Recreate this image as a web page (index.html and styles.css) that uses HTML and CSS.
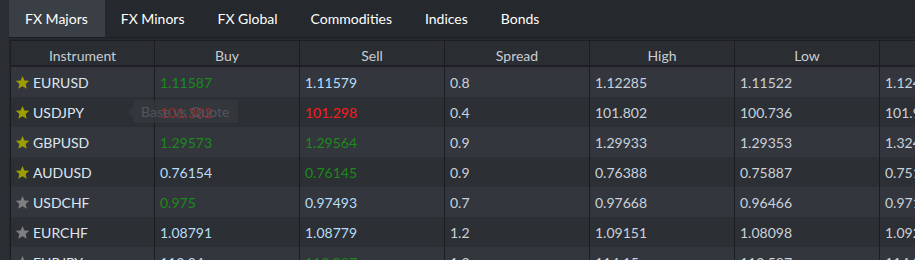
FILE: index.html
```html
<!DOCTYPE html>
<html lang="en">
<head>
    <meta charset="UTF-8">
    <title>Quotes</title>
    <link rel="stylesheet" href="styles.css">
</head>
<body>
    <div class="panel">
        <nav class="tabs">
            <a class="tab active">FX Majors</a>
            <a class="tab">FX Minors</a>
            <a class="tab">FX Global</a>
            <a class="tab">Commodities</a>
            <a class="tab">Indices</a>
            <a class="tab">Bonds</a>
        </nav>

        <div class="grid-wrap">
            <table class="quotes">
                <thead>
                    <tr>
                        <th class="first">Instrument</th>
                        <th>Buy</th>
                        <th>Sell</th>
                        <th>Spread</th>
                        <th>High</th>
                        <th>Low</th>
                        <th>Open</th>
                    </tr>
                </thead>
                <tbody>
                    <tr>
                        <td class="name"><svg class="star fav" viewBox="0 0 24 24"><polygon points="12,1.5 15.1,8.6 22.8,9.3 17,14.5 18.7,22.1 12,18.1 5.3,22.1 7,14.5 1.2,9.3 8.9,8.6"/></svg>EURUSD</td>
                        <td class="up">1.11587</td>
                        <td class="px">1.11579</td>
                        <td>0.8</td>
                        <td>1.12285</td>
                        <td>1.11522</td>
                        <td>1.12435</td>
                    </tr>
                    <tr>
                        <td class="name"><svg class="star fav" viewBox="0 0 24 24"><polygon points="12,1.5 15.1,8.6 22.8,9.3 17,14.5 18.7,22.1 12,18.1 5.3,22.1 7,14.5 1.2,9.3 8.9,8.6"/></svg>USDJPY</td>
                        <td class="down">101.302</td>
                        <td class="down">101.298</td>
                        <td>0.4</td>
                        <td>101.802</td>
                        <td>100.736</td>
                        <td>101.912</td>
                    </tr>
                    <tr>
                        <td class="name"><svg class="star fav" viewBox="0 0 24 24"><polygon points="12,1.5 15.1,8.6 22.8,9.3 17,14.5 18.7,22.1 12,18.1 5.3,22.1 7,14.5 1.2,9.3 8.9,8.6"/></svg>GBPUSD</td>
                        <td class="up">1.29573</td>
                        <td class="up">1.29564</td>
                        <td>0.9</td>
                        <td>1.29933</td>
                        <td>1.29353</td>
                        <td>1.32441</td>
                    </tr>
                    <tr>
                        <td class="name"><svg class="star fav" viewBox="0 0 24 24"><polygon points="12,1.5 15.1,8.6 22.8,9.3 17,14.5 18.7,22.1 12,18.1 5.3,22.1 7,14.5 1.2,9.3 8.9,8.6"/></svg>AUDUSD</td>
                        <td class="px">0.76154</td>
                        <td class="up">0.76145</td>
                        <td>0.9</td>
                        <td>0.76388</td>
                        <td>0.75887</td>
                        <td>0.75122</td>
                    </tr>
                    <tr>
                        <td class="name"><svg class="star" viewBox="0 0 24 24"><polygon points="12,1.5 15.1,8.6 22.8,9.3 17,14.5 18.7,22.1 12,18.1 5.3,22.1 7,14.5 1.2,9.3 8.9,8.6"/></svg>USDCHF</td>
                        <td class="up">0.975</td>
                        <td class="px">0.97493</td>
                        <td>0.7</td>
                        <td>0.97668</td>
                        <td>0.96466</td>
                        <td>0.97112</td>
                    </tr>
                    <tr>
                        <td class="name"><svg class="star" viewBox="0 0 24 24"><polygon points="12,1.5 15.1,8.6 22.8,9.3 17,14.5 18.7,22.1 12,18.1 5.3,22.1 7,14.5 1.2,9.3 8.9,8.6"/></svg>EURCHF</td>
                        <td class="px">1.08791</td>
                        <td class="px">1.08779</td>
                        <td>1.2</td>
                        <td>1.09151</td>
                        <td>1.08098</td>
                        <td>1.09214</td>
                    </tr>
                    <tr>
                        <td class="name"><svg class="star" viewBox="0 0 24 24"><polygon points="12,1.5 15.1,8.6 22.8,9.3 17,14.5 18.7,22.1 12,18.1 5.3,22.1 7,14.5 1.2,9.3 8.9,8.6"/></svg>EURJPY</td>
                        <td class="px">113.04</td>
                        <td class="up">112.987</td>
                        <td>1.3</td>
                        <td>114.15</td>
                        <td>112.587</td>
                        <td>114.22</td>
                    </tr>
                </tbody>
            </table>

            <div class="tooltip">Base vs Quote</div>
        </div>
    </div>
</body>
</html>
```

FILE: styles.css
```css
body {
    margin: 0;
    background: #2a2d32;
    font-family: Lato, "Open Sans", sans-serif;
    font-size: 14px;
    overflow: hidden;
    height: 260px;
}
.panel {
    margin-left: 9px;
    background: #25282d;
    height: 260px;
}
.tabs {
    display: flex;
    height: 37px;
    border-bottom: 1px solid #1d1f23;
    margin-bottom: 2px;
}
.tab {
    display: flex;
    align-items: center;
    padding: 0 17px 0 16px;
    color: #ffffff;
    cursor: pointer;
}
.tab.active {
    background: #3a3e45;
}
.grid-wrap {
    position: relative;
    margin-left: 1px;
}
.quotes {
    border-collapse: collapse;
    table-layout: fixed;
    width: 1009px;
    border: 1px solid #1b1d21;
}
.quotes th {
    width: 144px;
    height: 18px;
    line-height: 18px;
    padding: 6px 0 0;
    font-weight: normal;
    color: #c9cdd2;
    background: #2a2d32;
    border-right: 1px solid #1b1d21;
    border-bottom: 2px solid #1d1f23;
    text-align: center;
}
.quotes th.first {
    width: 143px;
}
.quotes td {
    height: 30px;
    padding: 0 0 0 5px;
    color: #c9d2dc;
    border-right: 1px solid #1b1d21;
    white-space: nowrap;
}
.quotes tbody tr:nth-child(odd) td {
    background: #33363d;
}
.quotes tbody tr:nth-child(even) td {
    background: #2c2f34;
}
.quotes td.name {
    color: #dde6f0;
    padding-left: 4px;
}
.star {
    width: 15px;
    height: 15px;
    fill: #7f7f80;
    vertical-align: -2px;
    margin-right: 3px;
}
.star.fav {
    fill: #9f9e00;
}
.quotes td.px {
    color: #b7ddf8;
}
.quotes td.up {
    color: #1a8a1a;
}
.quotes td.down {
    color: #ff1a1a;
}
.tooltip {
    position: absolute;
    left: 123px;
    top: 60px;
    padding: 0 9px 0 8px;
    line-height: 23px;
    border-radius: 3px;
    background: rgba(58, 62, 68, 0.55);
    color: rgba(90, 94, 100, 0.8);
}
.tooltip::before {
    content: "";
    position: absolute;
    left: -5px;
    top: 7px;
    border-top: 5px solid transparent;
    border-bottom: 5px solid transparent;
    border-right: 5px solid rgba(58, 62, 68, 0.55);
}
```
